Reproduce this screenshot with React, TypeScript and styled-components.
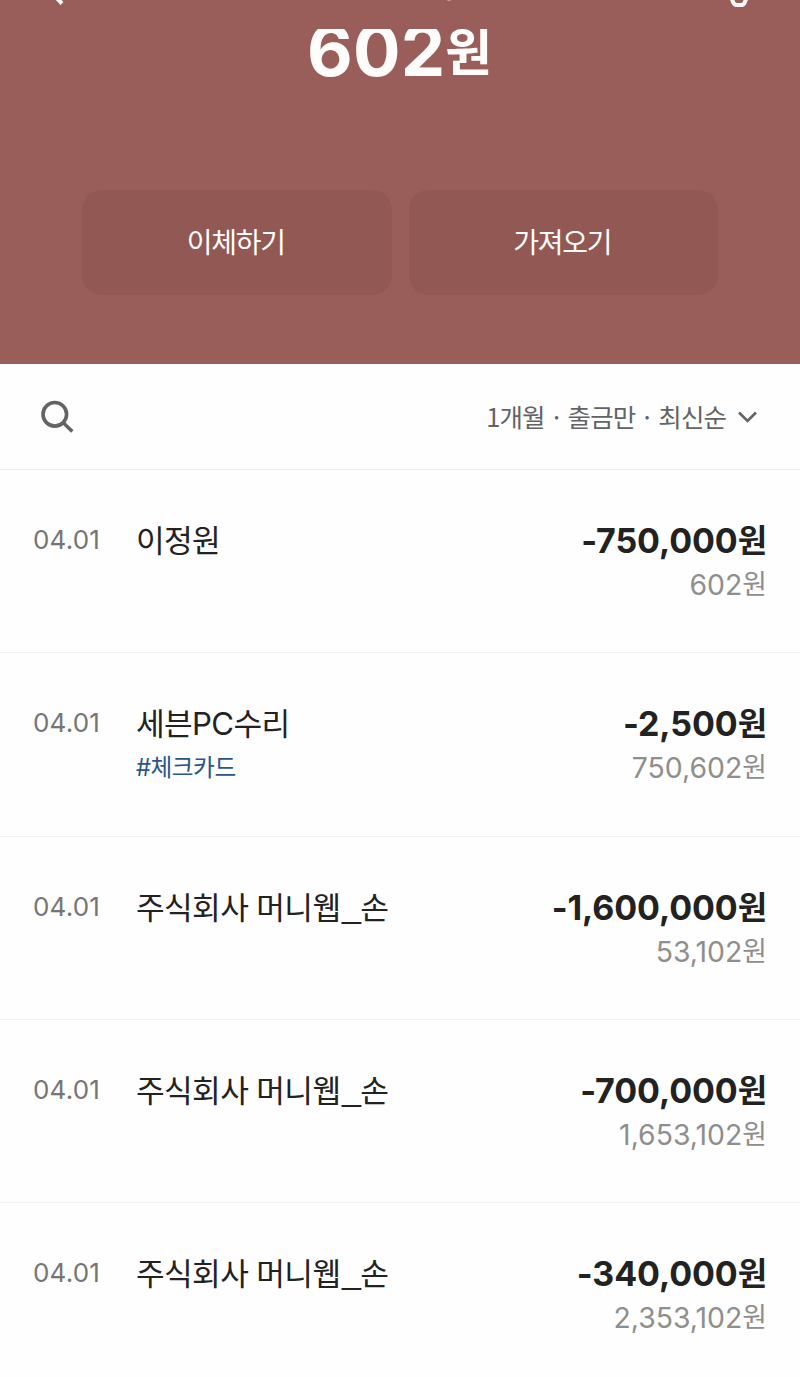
import React from "react";
import styled, { createGlobalStyle } from "styled-components";

const Global = createGlobalStyle`
  *, *::before, *::after { box-sizing: border-box; }
  html, body { margin: 0; padding: 0; background: #fefefe; }
  body { font-family: Inter, "Noto Sans CJK KR", sans-serif; overflow: hidden; }
  button { font: inherit; border: 0; padding: 0; background: none; color: inherit; }
`;

const Screen = styled.main`
  width: 800px;
  height: 1377px;
  overflow: hidden;
  background: #fefefe;
`;

const Hero = styled.header`
  height: 364px;
  background: #995e5a;
  color: #fffdfb;
  display: flex;
  flex-direction: column;
`;

const NavBar = styled.div`
  height: 29px;
  flex: none;
  svg { display: block; }
`;

const BalanceWindow = styled.div`
  height: 160.5px;
  flex: none;
  overflow: hidden;
`;

const Balance = styled.h1`
  margin: -16px 0 0 307px;
  font-size: 70.5px;
  font-weight: 700;
  line-height: 76px;
  height: 76px;
  display: flex;
  align-items: baseline;
  letter-spacing: 0.2px;
`;

const BalanceUnit = styled.span`
  font-family: "Noto Sans CJK KR", sans-serif;
  font-size: 51px;
  font-weight: 700;
  letter-spacing: 0;
  line-height: 1;
  margin-bottom: 14.5px;
  align-self: flex-end;
`;

const Actions = styled.div`
  display: flex;
  gap: 17px;
  padding: 0 82px;
`;

const ActionButton = styled.button`
  flex: 1;
  height: 105px;
  border-radius: 20px;
  background: #915854;
  font-family: "Noto Sans CJK KR", sans-serif;
  font-size: 28px;
  letter-spacing: -1.2px;
  line-height: 40px;
  padding: 0 2px 2px 0;
`;

const FilterBar = styled.div`
  height: 106px;
  border-bottom: 1px solid #ececec;
  display: flex;
  align-items: center;
  justify-content: space-between;
  padding: 0 43px 0 40px;
  color: #636363;
  svg { display: block; }
`;

const Filter = styled.button`
  display: flex;
  align-items: center;
  gap: 12px;
  font-family: "Noto Sans CJK KR", sans-serif;
  font-size: 25.5px;
  letter-spacing: -0.9px;
  line-height: 36px;
`;

const FilterText = styled.span`
  padding-bottom: 1px;
`;

const List = styled.ul`
  list-style: none;
  margin: 0;
  padding: 0;
`;

const Row = styled.li`
  height: 183.25px;
  border-bottom: 1px solid #f1f1f1;
  padding: 48px 33px 0;
  display: flex;
  align-items: flex-start;
`;

const DateLabel = styled.time`
  width: 103px;
  font-size: 26px;
  letter-spacing: 0.2px;
  line-height: 43px;
  color: #757575;
`;

const Detail = styled.div`
  flex: 1;
  display: flex;
  flex-direction: column;
`;

const Name = styled.span`
  font-size: 31.2px;
  line-height: 46px;
  height: 44px;
  letter-spacing: -0.65px;
  color: #222;
`;

const Underscore = styled.span`
  font-family: "Liberation Sans", sans-serif;
  font-size: 34px;
  line-height: 1;
  margin-left: 1.5px;
  vertical-align: 2px;
`;

const Tag = styled.span`
  font-size: 23.7px;
  line-height: 46px;
  letter-spacing: -0.5px;
  color: #2b5587;
`;

const Sums = styled.div`
  display: flex;
  flex-direction: column;
  align-items: flex-end;
`;

const Amount = styled.strong`
  font-size: 34px;
  font-weight: 700;
  line-height: 45px;
  height: 44px;
  letter-spacing: -0.1px;
  color: #222;
`;

const After = styled.span`
  font-size: 28.4px;
  line-height: 46px;
  height: 44px;
  color: #8e8e8e;
`;

const Won = styled.span<{ $size: number }>`
  font-family: "Noto Sans CJK KR", sans-serif;
  font-size: ${(p) => p.$size}px;
  line-height: 1;
  vertical-align: 1px;
`;

type Entry = { name: string; tag?: string; amount: string; after: string };

const entries: Entry[] = [
  { name: "이정원", amount: "-750,000", after: "602" },
  { name: "세븐PC수리", tag: "#체크카드", amount: "-2,500", after: "750,602" },
  { name: "주식회사 머니웹_손", amount: "-1,600,000", after: "53,102" },
  { name: "주식회사 머니웹_손", amount: "-700,000", after: "1,653,102" },
  { name: "주식회사 머니웹_손", amount: "-340,000", after: "2,353,102" },
];

const named = (text: string) =>
  text.split(/(_)/).map((part, i) => (part === "_" ? <Underscore key={i}>_</Underscore> : part));

export default function App() {
  return (
    <Screen>
      <Global />
      <Hero>
        <NavBar>
          <svg width="800" height="29" viewBox="0 0 800 29" fill="none" stroke="#fffdfb">
            <path d="M62 3.5 45 -14 62 -31" strokeWidth="4" />
            <path d="M443 -5Q449 4.500 455 -5" strokeWidth="2" opacity="0.6" />
            <path d="M731 -3 733.500 3Q734.500 5 737 5H741Q743.500 5 744.500 3L747 -3" strokeWidth="4" />
          </svg>
        </NavBar>
        <BalanceWindow>
          <Balance>602<BalanceUnit>원</BalanceUnit></Balance>
        </BalanceWindow>
        <Actions>
          <ActionButton>이체하기</ActionButton>
          <ActionButton>가져오기</ActionButton>
        </Actions>
      </Hero>
      <FilterBar>
        <svg width="34" height="34" viewBox="0 0 34 34" fill="none" stroke="#636363" strokeWidth="3.600">
          <circle cx="14.800" cy="14.300" r="11.800" />
          <path d="M23 22.500 32.300 31.500" />
        </svg>
        <Filter>
          <FilterText>1개월 · 출금만 · 최신순</FilterText>
          <svg width="19" height="12" viewBox="0 0 19 12" fill="none" stroke="#636363" strokeWidth="2.600">
            <path d="M1 1.500 9.500 10 18 1.500" />
          </svg>
        </Filter>
      </FilterBar>
      <List>
        {entries.map((e, i) => (
          <Row key={i}>
            <DateLabel>04.01</DateLabel>
            <Detail>
              <Name>{named(e.name)}</Name>
              {e.tag && <Tag>{e.tag}</Tag>}
            </Detail>
            <Sums>
              <Amount>{e.amount}<Won $size={32}>원</Won></Amount>
              <After>{e.after}<Won $size={26.8}>원</Won></After>
            </Sums>
          </Row>
        ))}
      </List>
    </Screen>
  );
}
